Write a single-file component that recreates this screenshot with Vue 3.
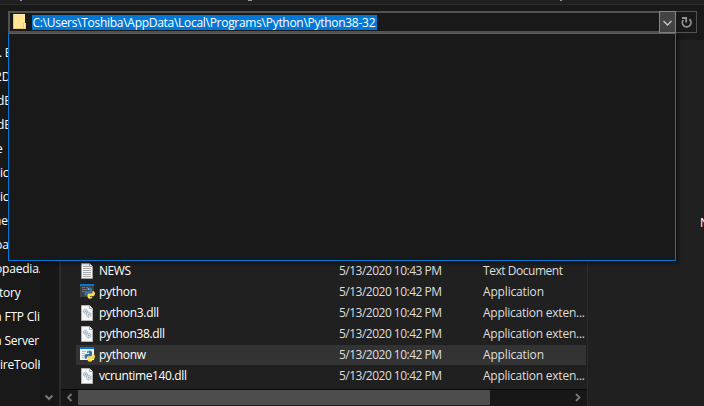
<script setup>
const places = [
  { name: '. E', x: -1 }, { name: '2D', x: -5 }, { name: 'dE', x: -3 }, { name: 'dE', x: -3 },
  { name: 'e', x: -4 }, { name: 'ic', x: 0 }, { name: 'ic', x: 0 }, { name: 'ne', x: -6 },
  { name: 'pa', x: -5 }, { name: 'opaedia.', x: -5 }, { name: 'tory', x: -1 },
  { name: 'a FTP Cli', x: -5 }, { name: 'a Server', x: -5 }, { name: 'ireToolK', x: 0 }
]
const files = [
  { name: 'NEWS', icon: 'text', time: '10:43', type: 'Text Document', w: 32, tw: 80 },
  { name: 'python', icon: 'console', time: '10:42', type: 'Application', w: 38, tw: 61 },
  { name: 'python3.dll', icon: 'dll', time: '10:42', type: 'Application exten...', w: 60, tw: 102 },
  { name: 'python38.dll', icon: 'dll', time: '10:42', type: 'Application exten...', w: 66, tw: 102 },
  { name: 'pythonw', icon: 'window', time: '10:42', type: 'Application', w: 47, tw: 61, hover: true },
  { name: 'vcruntime140.dll', icon: 'dll', time: '10:42', type: 'Application exten...', w: 88, tw: 102 }
]
</script>

<template>
  <div class="window">
    <header class="ribbon"><i class="tick a"></i><i class="tick b"></i><i class="tick c"></i></header>
    <div class="address-row">
      <div class="address">
        <svg class="folder" width="14" height="18" viewBox="0 0 14 18">
          <path d="M1 1h11v9h1v6H1z" fill="#ffe594" />
          <path d="M1 1h11v1H1z" fill="#fff0b3" />
          <path d="M10 10h3v6h-3z" fill="#efcb62" /><path d="M11 10h1v5h-1z" fill="#fff0ad" />
          <path d="M0 1h1v15H0zM1 15h10v1H1z" fill="#e9c65e" />
        </svg>
        <span class="selection"><svg width="345" height="15"><text x="0.5" y="11.5" textLength="343">C:\Users\Toshiba\AppData\Local\Programs\Python\Python38-32</text></svg></span>
      </div>
      <div class="drop"><svg width="15" height="20" viewBox="0 0 15 20"><path d="M3.5 9l4 4 4-4" fill="none" stroke="#c8c8c8" stroke-width="1.3" /></svg></div>
      <div class="refresh"><svg width="20" height="20" viewBox="0 0 20 20"><path d="M13.4 7.2A4.3 4.3 0 1 1 7.2 8M6 6h4.2v4.6" fill="none" stroke="#929292" stroke-width="1.8" /></svg></div>
    </div>
    <main class="body">
      <aside class="sidebar">
        <div class="places">
          <div v-for="(p, i) in places" :key="i" class="place"><span :style="{ marginLeft: p.x + 'px' }">{{ p.name }}</span></div>
        </div>
        <div class="side-scroll"><svg width="10" height="8" viewBox="0 0 10 8"><path d="M1.5 1.5L5 5l3.5-3.5" fill="none" stroke="#777" stroke-width="2" /></svg></div>
      </aside>
      <section class="list">
        <div class="rows">
          <div v-for="f in files" :key="f.name" class="row" :class="{ hover: f.hover }">
            <svg class="icon" width="16" height="16" viewBox="0 0 16 16">
              <g v-if="f.icon === 'text'">
                <path d="M1.5.5h8l3 3v12h-11z" fill="#f5f5f5" stroke="#9d9d9d" />
                <path d="M9.5.5v3h3" fill="#fff" stroke="#9d9d9d" />
                <path d="M3 3.5h6M3 5.5h8M3 7.5h8M3 9.5h8M3 11.5h8M3 13.5h8" stroke="#aaa" />
              </g>
              <g v-else-if="f.icon === 'dll'">
                <path d="M1.5.5h8l3 3v12h-11z" fill="#f7f7f7" stroke="#b5b5b5" />
                <path d="M9.5.5v3h3" fill="#fff" stroke="#a5a5a5" />
                <g fill="#d8e5ec" stroke="#8da1ad"><circle cx="5.3" cy="6.2" r="2" stroke-dasharray="1 .5" /><circle cx="8.7" cy="9.6" r="2.4" stroke-dasharray="1 .5" /></g>
                <g fill="#849eac"><circle cx="5.3" cy="6.2" r=".7" /><circle cx="8.7" cy="9.6" r=".8" /></g>
              </g>
              <g v-else>
                <path d="M0 0h14v13H0z" :fill="f.icon === 'console' ? '#3b4042' : '#f2f2f2'" />
                <path d="M0 0h14v2H0z" fill="#0078d7" />
                <path v-if="f.icon === 'console'" d="M2 3.5h3M2 5.5h5M2 7.5h3M6 3.5h2" stroke="#31a33e" />
                <path v-else d="M2 4.5h4M2 6.5h3M2 8.5h3M2 10.5h2" stroke="#b8bfc5" />
                <path d="M7 5q0-1.5 2.5-1.5T12 5v3q0 1.5-1.5 1.5H8q-1.5 0-1.5 2.5H6q-1.5 0-1.5-2.5T6 7h3V6H7z" fill="#3875ab" />
                <path d="M12.5 7H13q2 0 2 2.5T13 12h-3v.8h2.5q0 2-2.5 2t-2.5-2v-2Q7.5 9.5 9 9.5h2q1.5 0 1.5-1.5z" fill="#ffdb4c" />
                <circle cx="8.5" cy="4.9" r=".5" fill="#fff" />
              </g>
            </svg>
            <svg class="label name" height="20"><text x="0" y="14" :textLength="f.w">{{ f.name }}</text></svg>
            <svg class="label date" height="20"><text x="0" y="14" textLength="103">5/13/2020 {{ f.time }} PM</text></svg>
            <svg class="label type" height="20"><text x="0" y="14" :textLength="f.tw">{{ f.type }}</text></svg>
          </div>
        </div>
        <div class="scrollbar">
          <svg width="17" height="16" viewBox="0 0 17 16"><path d="M10.5 4L7 7.5l3.5 3.5" fill="none" stroke="#777" stroke-width="1.8" /></svg>
          <div class="track"><div class="thumb"></div></div>
          <svg width="17" height="16" viewBox="0 0 17 16"><path d="M6 4l3.5 3.5L6 11" fill="none" stroke="#777" stroke-width="1.8" /></svg>
        </div>
      </section>
      <section class="preview"><span>N</span></section>
    </main>
    <div class="suggestions"></div>
  </div>
</template>

<style>
body { overflow: hidden; background: #202020; }
</style>
<style scoped>
* { box-sizing: border-box; }
.window { position: relative; display: flex; flex-direction: column; width: 704px; height: 406px; overflow: hidden; background: #202020; color: #fff; font: 12px "Open Sans", "Noto Sans", sans-serif; }
svg { display: block; flex: none; }
text { fill: currentColor; }
.ribbon { display: flex; height: 5px; flex: none; background: #202020; border-bottom: 1px solid #2b2b2b; }
.tick { width: 2px; height: 1px; background: #92999d; }
.tick.a { margin-left: 20px; }
.tick.b { width: 4px; margin-left: 226px; }
.tick.c { margin-left: 308px; }
.address-row { display: flex; height: 35px; flex: none; padding: 6px 0 7px 8px; background: #191919; }
.address { display: flex; align-items: center; width: 651px; height: 22px; padding-left: 3px; border: 2px solid #535353; border-right: 0; background: #191919; }
.folder { margin-right: 5px; }
.selection { background: #0078d7; }
.drop { width: 17px; border: 1px solid #858585; background: #434343; }
.refresh { width: 21px; border: 1px solid #535353; border-left: 0; background: #191919; }
.body { display: flex; flex: 1; min-height: 0; }
.sidebar { display: flex; width: 59px; background: #191919; }
.places { width: 40px; padding-top: 1px; overflow: hidden; }
.place { height: 24px; line-height: 23px; white-space: nowrap; letter-spacing: -0.2px; }
.side-scroll { display: flex; width: 19px; align-items: flex-end; justify-content: center; padding: 0 2px 4px 0; background: #171717; }
.list { display: flex; flex-direction: column; justify-content: flex-end; width: 529px; border-left: 2px solid #2b2b2b; border-right: 1px solid #2b2b2b; }
.rows { padding: 0 1px 2px 15px; }
.row { display: flex; align-items: center; height: 20px; margin-bottom: 1px; padding-left: 4px; }
.row.hover { background: #333; }
.label { overflow: visible; }
.name { width: 240px; margin-left: 3px; }
.date { width: 144px; color: #dedede; }
.type { width: 103px; color: #dedede; }
.scrollbar { display: flex; height: 17px; border-top: 1px solid #080808; background: #171717; }
.track { flex: 1; }
.thumb { width: 412px; height: 15px; background: #4d4d4d; }
.preview { flex: 1; padding: 174px 0 0 112px; overflow: hidden; }
.suggestions { position: absolute; left: 8px; top: 33px; width: 668px; height: 228px; border: 1px solid #0078d7; background: #191919; box-shadow: 2px 2px 4px #0008; }
</style>
